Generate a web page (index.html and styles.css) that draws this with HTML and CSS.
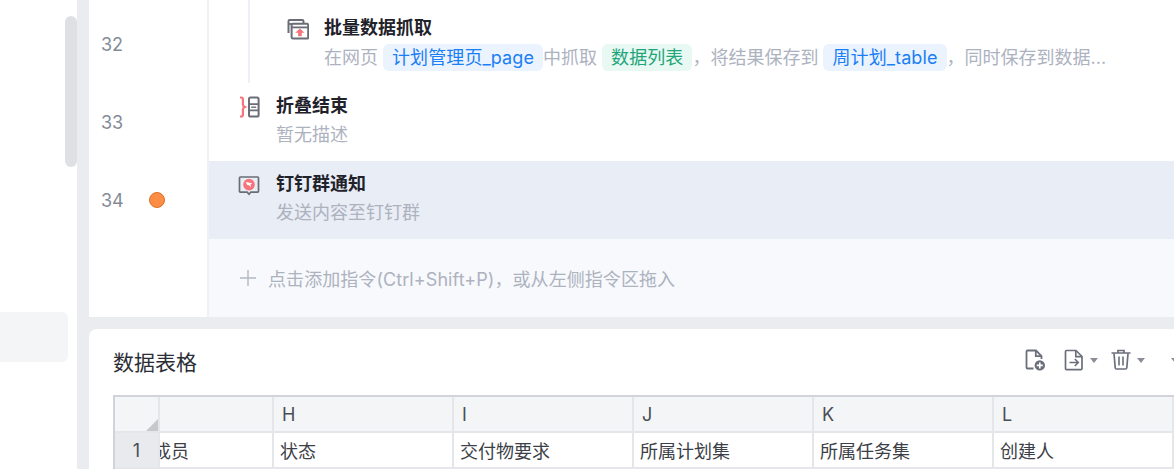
FILE: index.html
```html
<!DOCTYPE html>
<html lang="zh-CN">
<head>
<meta charset="utf-8">
<title>流程编辑</title>
<link rel="stylesheet" href="styles.css">
</head>
<body>
<div class="app">
  <aside class="side">
    <div class="side-item"></div>
    <div class="scrollbar"></div>
  </aside>
  <main class="work">
    <section class="flow">
      <div class="row row-first">
        <div class="gutter"><span class="num">32</span></div>
        <div class="step nested">
          <div class="nest-line"></div>
          <svg class="ico" viewBox="0 0 22 22" width="22" height="22">
            <path d="M1.500 15V3.200q0-1.200 1.200-1.200h12.600q1.200 0 1.200 1.200V5" fill="none" stroke="#6a6d76" stroke-width="2"/>
            <path d="M1.500 6h14" stroke="#6a6d76" stroke-width="1.800"/>
            <rect x="4.600" y="5.800" width="16.600" height="14.800" rx="1.400" fill="#fff" stroke="#6a6d76" stroke-width="2"/>
            <path d="M4.600 9.400h16.600" stroke="#6a6d76" stroke-width="1.800"/>
            <path d="M16.500 7.400h1.600M19 7.400h1" stroke="#fff" stroke-width="1"/>
            <path d="M12.900 10.400l4.600 4.400h-2.800v3.400h-3.600v-3.400H8.300z" fill="#f8737b"/>
          </svg>
          <div class="text">
            <div class="title">批量数据抓取</div>
            <div class="desc">在网页<span class="tag tag-blue">计划管理页_page</span>中抓取<span class="tag tag-green">数据列表</span>，将结果保存到<span class="tag tag-blue">周计划_table</span>，同时保存到数据...</div>
          </div>
        </div>
      </div>
      <div class="row">
        <div class="gutter"><span class="num">33</span></div>
        <div class="step">
          <svg class="ico" viewBox="0 0 22 22" width="22" height="22">
            <path d="M2 1.500h1.200q1.700 0 1.700 1.700v5.300q0 1.700 1.900 2.500-1.900.8-1.900 2.500v5.300q0 1.700-1.700 1.700H2" fill="none" stroke="#f8737b" stroke-width="2.200"/>
            <rect x="11" y="1.600" width="9.600" height="19" rx="1.600" fill="none" stroke="#6a6d76" stroke-width="2"/>
            <path d="M11 8.200h9.600M11 14.400h9.600" stroke="#6a6d76" stroke-width="1.800"/>
            <path d="M13.200 11.200h5" stroke="#6a6d76" stroke-width="1.400"/>
          </svg>
          <div class="text">
            <div class="title">折叠结束</div>
            <div class="desc">暂无描述</div>
          </div>
        </div>
      </div>
      <div class="row">
        <div class="gutter"><span class="num">34</span><span class="breakpoint"></span></div>
        <div class="step active">
          <svg class="ico" viewBox="0 0 22 22" width="22" height="22">
            <path d="M2.400 3h17.200q.9 0 .9.900v13.400q0 .9-.9.9h-6.800L11 20.200l-1.800-2H2.400q-.9 0-.9-.9V3.900q0-.9.900-.9z" fill="none" stroke="#6a6d76" stroke-width="1.700"/>
            <circle cx="11" cy="10.600" r="5.800" fill="#f8737b"/>
            <path d="M7.800 8l6.400 1.200-1.800 1.400.6 3-2-2.400-1.800-.2z" fill="#fff"/>
          </svg>
          <div class="text">
            <div class="title">钉钉群通知</div>
            <div class="desc">发送内容至钉钉群</div>
          </div>
        </div>
      </div>
      <div class="row">
        <div class="gutter"></div>
        <div class="add">
          <svg class="plus" viewBox="0 0 16 16" width="16" height="16"><path d="M8 0v16M0 8h16" stroke="#b3b8c2" stroke-width="1.400"/></svg>
          <span class="add-label">点击添加指令(Ctrl+Shift+P)，或从左侧指令区拖入</span>
        </div>
      </div>
    </section>
    <section class="data">
      <header class="data-head">
        <h2 class="data-title">数据表格</h2>
        <div class="tools">
          <svg class="tool" viewBox="0 0 22 22" width="22" height="22">
            <path d="M9.500 19.500H3.600q-1.100 0-1.100-1.100V2.600q0-1.100 1.100-1.100h8.400l5.500 5.500v3" fill="none" stroke="#6a6f7a" stroke-width="1.800"/>
            <path d="M11.800 1.800v5.400h5.400" fill="none" stroke="#6a6f7a" stroke-width="1.800"/>
            <circle cx="15.800" cy="16.400" r="5.200" fill="#6a6f7a"/>
            <path d="M15.800 13.400v6M12.800 16.400h6" stroke="#fff" stroke-width="1.600"/>
          </svg>
          <svg class="tool tool-b" viewBox="0 0 20 22" width="20" height="22">
            <path d="M1.500 2.600q0-1.100 1.100-1.100h9.400l6 6v12q0 1.100-1.100 1.100H2.600q-1.100 0-1.100-1.100z" fill="none" stroke="#6a6f7a" stroke-width="1.700"/>
            <path d="M11.800 1.800v5.900h5.900" fill="none" stroke="#6a6f7a" stroke-width="1.700"/>
            <path d="M5.500 13.500h8.500M10.800 10l3.500 3.500-3.500 3.500" fill="none" stroke="#6a6f7a" stroke-width="1.600"/>
          </svg>
          <span class="caret"></span>
          <svg class="tool tool-c" viewBox="0 0 20 22" width="20" height="22">
            <path d="M.5 4h19M7 3.600V1.500h6v2.100" fill="none" stroke="#6a6f7a" stroke-width="1.700"/>
            <path d="M3 4.500l1.200 14.200q.1 1.300 1.300 1.300h9q1.200 0 1.300-1.300L17 4.500" fill="none" stroke="#6a6f7a" stroke-width="1.700"/>
            <path d="M8 7.500v9M12 7.500v9" stroke="#6a6f7a" stroke-width="1.600"/>
          </svg>
          <span class="caret caret-c"></span>
          <span class="caret caret-cut"></span>
        </div>
      </header>
      <div class="sheet">
        <div class="cell corner"><span class="corner-mark"></span></div>
        <div class="cell head cell-g"></div>
        <div class="cell head">H</div>
        <div class="cell head">I</div>
        <div class="cell head">J</div>
        <div class="cell head">K</div>
        <div class="cell head">L</div>
        <div class="cell rowhead">1</div>
        <div class="cell body cell-g"><span class="clip">成员</span></div>
        <div class="cell body">状态</div>
        <div class="cell body">交付物要求</div>
        <div class="cell body">所属计划集</div>
        <div class="cell body">所属任务集</div>
        <div class="cell body">创建人</div>
      </div>
    </section>
  </main>
</div>
</body>
</html>
```

FILE: styles.css
```css
* { box-sizing: border-box; }
html, body { margin: 0; height: 100%; overflow: hidden; }
body {
  background: #ebecf0;
  font-family: Inter, "Noto Sans CJK SC", sans-serif;
  color: #22252c;
}
.app { display: flex; gap: 12px; height: 469px; }

.side {
  width: 77px;
  flex: none;
  background: #fff;
  position: relative;
}
.side-item {
  margin-top: 312px;
  width: 68px;
  height: 50px;
  background: #f4f5f7;
  border-radius: 0 6px 6px 0;
}
.scrollbar {
  position: absolute;
  left: 65px;
  top: 16px;
  width: 12px;
  height: 151px;
  border-radius: 6px;
  background: #dfe0e4;
}

.work { flex: 1; min-width: 0; display: flex; flex-direction: column; gap: 12px; }

.flow { height: 317px; flex: none; background: #fff; display: flex; flex-direction: column; }
.row { display: flex; height: 78px; flex: none; }
.row-first { height: 83px; }
.row-first .gutter { padding-top: 5px; }
.gutter {
  width: 120px;
  flex: none;
  display: flex;
  align-items: center;
  padding-left: 12px;
  border-right: 2px solid #f0f1f5;
}
.num { font-size: 18px; line-height: 26px; padding-top: 2px; color: #848b97; width: 48px; }
.breakpoint {
  width: 16px;
  height: 16px;
  border-radius: 50%;
  background: #fd8c45;
  border: 1px solid #dd6f25;
}

.step {
  flex: 1;
  min-width: 0;
  display: flex;
  align-items: flex-start;
  padding: 7px 0 0 29px;
  position: relative;
}
.active { background: #e9edf5; }
.nested { padding: 12px 0 0 78px; }
.nest-line {
  position: absolute;
  left: 39px;
  top: 0;
  bottom: 0;
  width: 2px;
  background: #eeeff4;
}
.ico { flex: none; margin: 6px 16px 0 0; }
.nested > .ico { margin-right: 15px; }
.text { min-width: 0; flex: 1; }
.title {
  font-family: "Noto Sans CJK SC", sans-serif;
  font-size: 18px;
  font-weight: 700;
  line-height: 28px;
  color: #1f222a;
}
.desc {
  font-size: 18px;
  line-height: 28px;
  margin-top: 3px;
  color: #adb2bf;
  white-space: nowrap;
}
.nested .desc { margin-top: 4px; }
.tag {
  display: inline-block;
  padding: 0 9px;
  border-radius: 6px;
  height: 27px;
  line-height: 27px;
  letter-spacing: .1px;
}
.tag-blue { background: #ebf3fe; color: #1a7ef5; margin-left: 5px; }
.tag-green { background: #e8f8f2; color: #1fa57a; margin-left: 5px; }

.add {
  flex: 1;
  background: #f7f9fc;
  display: flex;
  align-items: center;
  padding-left: 31px;
  font-size: 18px;
  color: #adb2bf;
  gap: 12px;
}
.add-label { letter-spacing: .07px; }
.plus { flex: none; }

.data {
  flex: 1;
  min-height: 0;
  background: #fff;
  border-radius: 8px 0 0 0;
  padding: 0 0 0 24px;
  overflow: hidden;
}
.data-head { display: flex; align-items: flex-start; justify-content: space-between; height: 66px; }
.data-title {
  margin: 0;
  font-family: "Noto Sans CJK SC", sans-serif;
  font-size: 21px;
  font-weight: 400;
  line-height: 64px;
  color: #2b2e36;
}
.tools { display: flex; align-items: center; height: 24px; margin-top: 19px; width: 150px; flex: none; }
.tool { flex: none; }
.tool-b { margin-left: 18px; }
.tool-c { margin-left: 13px; }
.caret {
  flex: none;
  width: 0;
  height: 0;
  margin-left: 6px;
  border: 4.500px solid transparent;
  border-top: 5px solid #8a8e98;
  border-bottom: 0;
}
.caret-cut { margin-left: 26px; }

.sheet {
  display: grid;
  grid-template-columns: 45px 114px repeat(5, 180px);
  grid-template-rows: 36px 36px;
  width: 1062px;
  border-top: 2px solid #d0d3da;
  border-left: 2px solid #d0d3da;
  font-size: 18px;
}
.cell {
  display: flex;
  align-items: center;
  padding-left: 6px;
  border-right: 2px solid #e4e6ea;
  border-bottom: 2px solid #e4e6ea;
  color: #3c3f47;
  overflow: hidden;
  white-space: nowrap;
}
.head { background: #f4f5f7; padding-left: 8px; color: #4a4d55; }
.corner { background: #f4f5f7; position: relative; }
.corner-mark {
  position: absolute;
  right: 0;
  bottom: 0;
  width: 0;
  height: 0;
  border-style: solid;
  border-width: 0 0 12px 12px;
  border-color: transparent transparent #c6c8cc transparent;
}
.rowhead { background: #e9eaed; justify-content: center; padding-left: 0; color: #4a4d55; }
.cell-g { padding-left: 0; }
.clip { margin-left: -7px; }
```
